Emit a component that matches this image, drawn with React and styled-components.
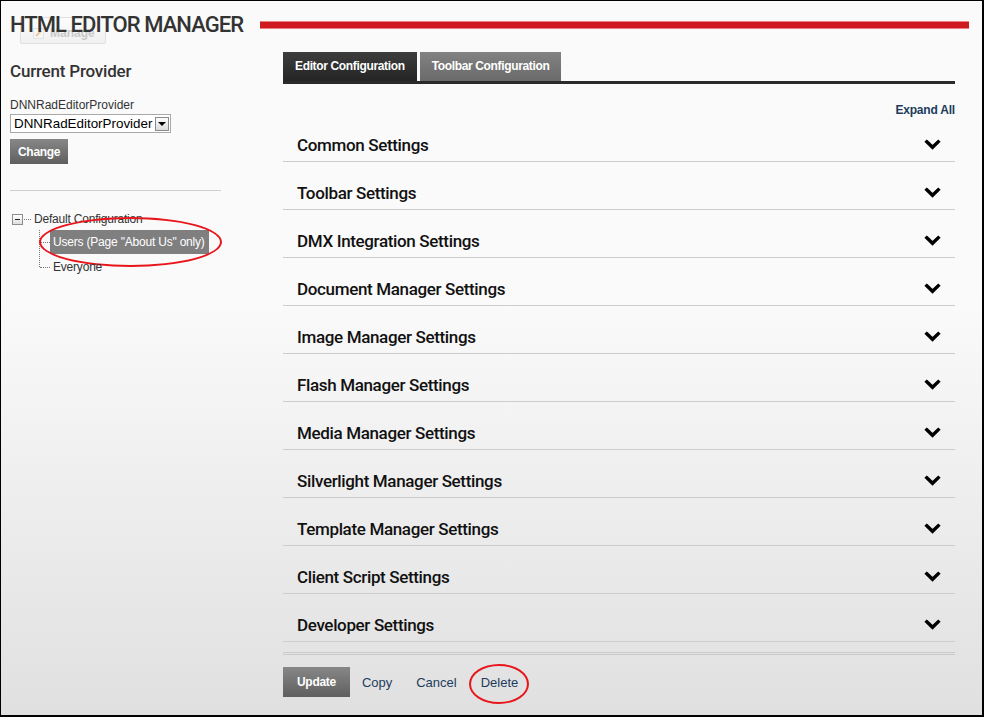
import React from 'react';
import styled, { createGlobalStyle } from 'styled-components';

const GlobalStyle = createGlobalStyle`
  html, body { margin: 0; padding: 0; }
  body { font-family: "Liberation Sans", Arial, sans-serif; }
`;

const Frame = styled.div`
  box-sizing: border-box;
  width: 984px;
  height: 717px;
  border: 1px solid #000;
  border-right-width: 2px;
  border-bottom-width: 2px;
  background: linear-gradient(#fafafa 0%, #fafafa 42%, #e0e0e0 100%);
  padding-left: 9px;
  overflow: hidden;
`;

const Header = styled.header`
  position: relative;
  display: flex;
  align-items: center;
  height: 47px;
  padding-right: 13px;
`;

const Title = styled.h1`
  position: relative;
  z-index: 1;
  margin: 0;
  font-family: Roboto, "Open Sans", sans-serif;
  font-weight: 500;
  font-size: 22px;
  letter-spacing: -0.95px;
  color: #333;
  white-space: nowrap;
`;

const RedRule = styled.div`
  flex: 1;
  height: 8px;
  margin-left: 17px;
  background: #cf1a20;
  border-top: 1px solid #e98184;
  border-bottom: 1px solid #e98184;
  box-sizing: border-box;
`;

const GhostButton = styled.div`
  position: absolute;
  left: 10px;
  top: 16px;
  width: 86px;
  height: 27px;
  box-sizing: border-box;
  display: flex;
  align-items: center;
  gap: 6px;
  padding: 5px 0 0 12px;
  border: 1px solid #e0e0e0;
  border-radius: 2px;
  background: linear-gradient(#fcfcfc, #f1f1f1);
  color: #c9c9c9;
  font-weight: bold;
  font-size: 12px;
`;

const Main = styled.div`
  display: flex;
`;

const Sidebar = styled.aside`
  width: 212px;
  margin-right: 61px;
`;

const SideHeading = styled.h2`
  margin: 12px 0 0;
  font-family: Roboto, "Open Sans", sans-serif;
  font-weight: 500;
  font-size: 17px;
  line-height: 22px;
  letter-spacing: -0.2px;
  color: #333;
`;

const FieldLabel = styled.div`
  margin-top: 16px;
  font-size: 12px;
  line-height: 14px;
  color: #333;
`;

const SelectBox = styled.div`
  margin-top: 2px;
  width: 161px;
  height: 19px;
  box-sizing: border-box;
  border: 1px solid #a9a9a9;
  background: #fff;
  display: flex;
  align-items: center;
  justify-content: space-between;
  padding: 0 1px 0 3px;
  font-size: 13.4px;
  color: #000;
`;

const SelectArrow = styled.span`
  width: 14px;
  height: 14px;
  box-sizing: border-box;
  border: 1px solid #8a8a8a;
  background: linear-gradient(#fdfdfd, #dcdcdc);
  display: flex;
  align-items: center;
  justify-content: center;
  &::after {
    content: "";
    border-left: 4px solid transparent;
    border-right: 4px solid transparent;
    border-top: 4px solid #000;
  }
`;

const ButtonSlot = styled.div`
  margin-top: 6px;
`;

const GreyButton = styled.button`
  display: block;
  height: ${p => p.$h}px;
  padding: 0 ${p => p.$px}px;
  border: none;
  background: linear-gradient(#878787, #5f5f5f);
  color: #fff;
  font-family: "Liberation Sans", Arial, sans-serif;
  font-weight: bold;
  font-size: 12px;
  letter-spacing: -0.3px;
`;

const Divider = styled.hr`
  margin: 26px 0 0;
  width: 211px;
  border: none;
  border-top: 1px solid #cfcfcf;
`;

const Tree = styled.div`
  margin-top: 22px;
  margin-left: 2px;
  font-family: "Liberation Sans", Arial, sans-serif;
  font-size: 12px;
  letter-spacing: -0.2px;
  color: #333;
`;

const TreeRoot = styled.div`
  display: flex;
  align-items: center;
  height: 12px;
`;

const Toggle = styled.span`
  width: 11px;
  height: 11px;
  box-sizing: border-box;
  border: 1px solid #8d8d8d;
  background: linear-gradient(#fff, #dedede);
  display: flex;
  align-items: center;
  justify-content: center;
  &::after {
    content: "";
    width: 5px;
    height: 1px;
    background: #222;
  }
`;

const Dots = styled.span`
  width: ${p => p.$w}px;
  margin: 0 ${p => p.$mr || 0}px 0 1px;
  border-top: 1px dotted #777;
`;

const ChildList = styled.div`
  position: relative;
  margin-left: 27px;
  padding-top: 5px;
  &::before {
    content: "";
    position: absolute;
    left: 0;
    top: 5px;
    bottom: 7px;
    border-left: 1px dotted #777;
  }
`;

const ChildRow = styled.div`
  display: flex;
  align-items: center;
  margin-top: ${p => p.$mt || 0}px;
`;

const NodeLabel = styled.span`
  position: relative;
  display: inline-block;
  padding: 0 4px 0 3px;
  line-height: ${p => (p.$selected ? 24 : 14)}px;
  background: ${p => (p.$selected ? '#7f7f7f' : 'transparent')};
  color: ${p => (p.$selected ? '#fff' : '#333')};
  white-space: nowrap;
`;

const RedEllipse = styled.span`
  position: absolute;
  left: ${p => p.$l}px;
  top: ${p => p.$t}px;
  width: ${p => p.$w}px;
  height: ${p => p.$h}px;
  box-sizing: border-box;
  border: 2px solid #e8161b;
  border-radius: 50%;
  pointer-events: none;
`;

const Content = styled.section`
  width: 672px;
  margin-top: 4px;
`;

const TabStrip = styled.div`
  display: flex;
  gap: 3px;
  border-bottom: 3px solid #2a2a2a;
`;

const Tab = styled.div`
  height: 29px;
  line-height: 29px;
  padding: 0 12px;
  background: ${p => (p.$active ? 'linear-gradient(#3d3d3d, #242424)' : 'linear-gradient(#828282, #6a6a6a)')};
  color: #fff;
  font-weight: bold;
  font-size: 12px;
  letter-spacing: -0.35px;
`;

const ExpandAll = styled.div`
  margin: 19px 0 -3px;
  text-align: right;
  font-weight: bold;
  font-size: 12px;
  line-height: 14px;
  letter-spacing: -0.2px;
  color: #1d3c5c;
`;

const Row = styled.div`
  display: flex;
  align-items: center;
  justify-content: space-between;
  padding: 20px 14px 5px;
  border-bottom: 1px solid #cdcdcd;
  font-family: Roboto, "Open Sans", sans-serif;
  font-weight: 500;
  font-size: 17px;
  line-height: 22px;
  letter-spacing: -0.35px;
  color: #111;
`;

const DoubleRule = styled.div`
  margin-top: 10px;
  height: 1px;
  border-top: 1px solid #cacaca;
  border-bottom: 1px solid #cacaca;
`;

const Actions = styled.div`
  display: flex;
  align-items: center;
  margin-top: 12px;
`;

const LinkButton = styled.span`
  position: relative;
  padding: 0 12px;
  font-size: 13px;
  color: #1d3c5c;
`;

const Chevron = () => (
  <svg width="17" height="12" viewBox="0 0 17 12">
    <path d="M2.8 2.8 L8.5 8.3 L14.2 2.8" fill="none" stroke="#000" strokeWidth="3.4" strokeLinecap="square" />
  </svg>
);

const PencilIcon = () => (
  <svg width="11" height="11" viewBox="0 0 11 11">
    <rect x="0.5" y="0.5" width="10" height="10" fill="#f6f6f6" stroke="#e2e2e2" />
    <path d="M3 8 L8 3" stroke="#e8c9a0" strokeWidth="2" />
  </svg>
);

const sections = [
  'Common Settings',
  'Toolbar Settings',
  'DMX Integration Settings',
  'Document Manager Settings',
  'Image Manager Settings',
  'Flash Manager Settings',
  'Media Manager Settings',
  'Silverlight Manager Settings',
  'Template Manager Settings',
  'Client Script Settings',
  'Developer Settings',
];

const App = () => {
  return (
    <Frame>
      <GlobalStyle />
      <Header>
        <GhostButton>
          <PencilIcon />
          Manage
        </GhostButton>
        <Title>HTML EDITOR MANAGER</Title>
        <RedRule />
      </Header>
      <Main>
        <Sidebar>
          <SideHeading>Current Provider</SideHeading>
          <FieldLabel>DNNRadEditorProvider</FieldLabel>
          <SelectBox>
            DNNRadEditorProvider
            <SelectArrow />
          </SelectBox>
          <ButtonSlot>
            <GreyButton $h={25} $px={8}>Change</GreyButton>
          </ButtonSlot>
          <Divider />
          <Tree>
            <TreeRoot>
              <Toggle />
              <Dots $w={7} $mr={3} />
              Default Configuration
            </TreeRoot>
            <ChildList>
              <ChildRow>
                <Dots $w={10} />
                <NodeLabel $selected>
                  Users (Page "About Us" only)
                  <RedEllipse $l={-11} $t={-13} $w={183} $h={50} />
                </NodeLabel>
              </ChildRow>
              <ChildRow $mt={6}>
                <Dots $w={10} />
                <NodeLabel>Everyone</NodeLabel>
              </ChildRow>
            </ChildList>
          </Tree>
        </Sidebar>
        <Content>
          <TabStrip>
            <Tab $active>Editor Configuration</Tab>
            <Tab>Toolbar Configuration</Tab>
          </TabStrip>
          <ExpandAll>Expand All</ExpandAll>
          {sections.map(s => (
            <Row key={s}>
              {s}
              <Chevron />
            </Row>
          ))}
          <DoubleRule />
          <Actions>
            <GreyButton $h={30} $px={14}>Update</GreyButton>
            <LinkButton>Copy</LinkButton>
            <LinkButton>Cancel</LinkButton>
            <LinkButton>
              Delete
              <RedEllipse $l={0} $t={-11} $w={60} $h={40} />
            </LinkButton>
          </Actions>
        </Content>
      </Main>
    </Frame>
  );
};

export default App;
